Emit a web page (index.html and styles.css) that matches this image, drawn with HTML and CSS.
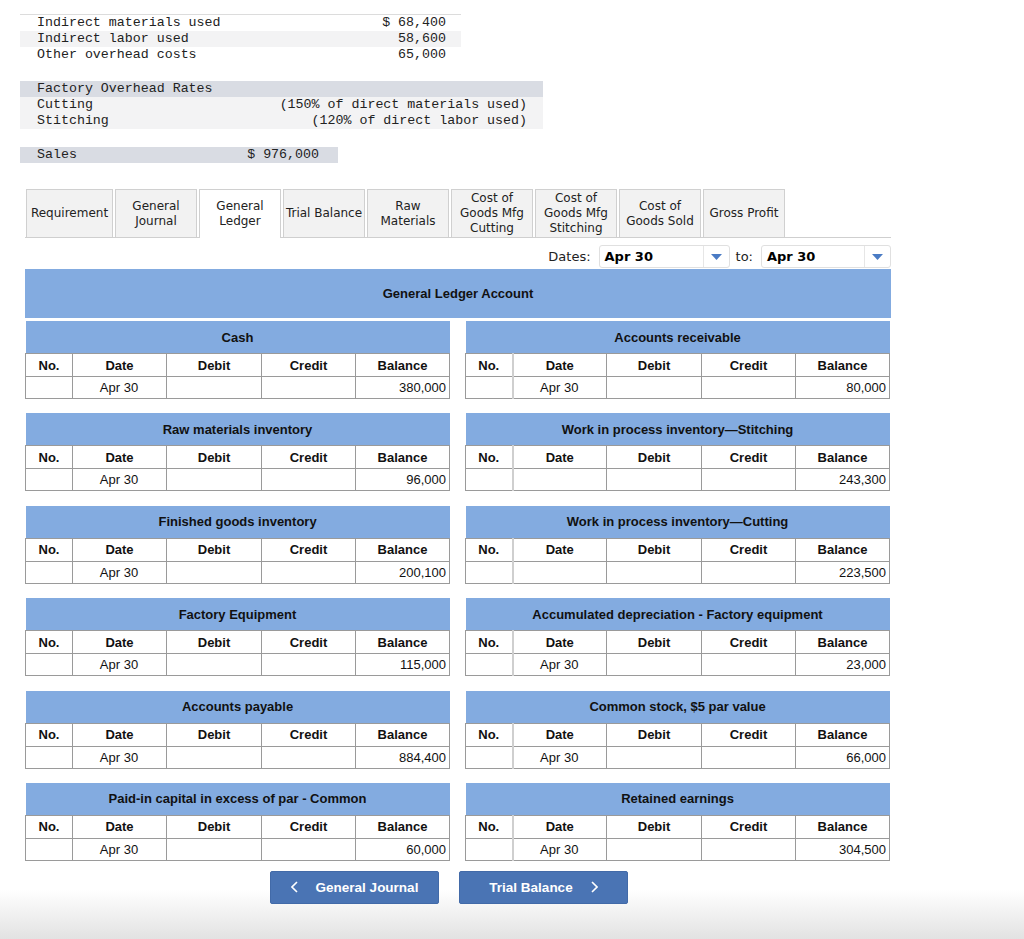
FILE: index.html
```html
<!DOCTYPE html>
<html lang="en">
<head>
<meta charset="utf-8">
<title>General Ledger</title>
<link rel="stylesheet" href="styles.css">
</head>
<body>
<div class="page">
  <table class="info info-overhead">
    <tr><td class="lbl">Indirect materials used</td><td class="amt">$ 68,400</td></tr>
    <tr class="alt"><td class="lbl">Indirect labor used</td><td class="amt">58,600</td></tr>
    <tr><td class="lbl">Other overhead costs</td><td class="amt">65,000</td></tr>
  </table>

  <table class="info info-rates">
    <tr class="head"><td class="lbl" colspan="2">Factory Overhead Rates</td></tr>
    <tr class="alt"><td class="lbl">Cutting</td><td class="amt">(150% of direct materials used)</td></tr>
    <tr class="alt"><td class="lbl">Stitching</td><td class="amt">(120% of direct labor used)</td></tr>
  </table>

  <table class="info info-sales">
    <tr class="head"><td class="lbl">Sales</td><td class="amt">$ 976,000</td></tr>
  </table>

  <div class="tabs">
    <div class="tab tab-first">Requirement</div>
    <div class="tab">General<br>Journal</div>
    <div class="tab active">General<br>Ledger</div>
    <div class="tab">Trial Balance</div>
    <div class="tab">Raw<br>Materials</div>
    <div class="tab">Cost of<br>Goods Mfg<br>Cutting</div>
    <div class="tab">Cost of<br>Goods Mfg<br>Stitching</div>
    <div class="tab">Cost of<br>Goods Sold</div>
    <div class="tab">Gross Profit</div>
  </div>

  <div class="dates">
    <span class="dates-label">Dates:</span>
    <div class="select sel-from">
      <span class="sel-value">Apr 30</span>
      <span class="sel-arrow"><svg width="11" height="6" viewBox="0 0 11 6"><path d="M0 0H11L5.5 6Z" fill="#4a7bc4"/></svg></span>
    </div>
    <span class="to-label">to:</span>
    <div class="select sel-to">
      <span class="sel-value">Apr 30</span>
      <span class="sel-arrow"><svg width="11" height="6" viewBox="0 0 11 6"><path d="M0 0H11L5.5 6Z" fill="#4a7bc4"/></svg></span>
    </div>
  </div>

  <div class="gl-head">General Ledger Account</div>

  <div class="accounts">
    <table class="acct">
      <colgroup><col class="c-no"><col class="c-date"><col class="c-deb"><col class="c-cred"><col class="c-bal"></colgroup>
      <tr><th class="title" colspan="5">Cash</th></tr>
      <tr class="hd"><th>No.</th><th>Date</th><th>Debit</th><th>Credit</th><th>Balance</th></tr>
      <tr class="row"><td></td><td class="date">Apr 30</td><td></td><td></td><td class="bal">380,000</td></tr>
    </table>
    <table class="acct right">
      <colgroup><col class="c-no"><col class="c-date"><col class="c-deb"><col class="c-cred"><col class="c-bal"></colgroup>
      <tr><th class="title" colspan="5">Accounts receivable</th></tr>
      <tr class="hd"><th class="no">No.</th><th>Date</th><th>Debit</th><th>Credit</th><th>Balance</th></tr>
      <tr class="row"><td class="no"></td><td class="date">Apr 30</td><td></td><td></td><td class="bal">80,000</td></tr>
    </table>

    <table class="acct">
      <colgroup><col class="c-no"><col class="c-date"><col class="c-deb"><col class="c-cred"><col class="c-bal"></colgroup>
      <tr><th class="title" colspan="5">Raw materials inventory</th></tr>
      <tr class="hd"><th>No.</th><th>Date</th><th>Debit</th><th>Credit</th><th>Balance</th></tr>
      <tr class="row"><td></td><td class="date">Apr 30</td><td></td><td></td><td class="bal">96,000</td></tr>
    </table>
    <table class="acct right">
      <colgroup><col class="c-no"><col class="c-date"><col class="c-deb"><col class="c-cred"><col class="c-bal"></colgroup>
      <tr><th class="title" colspan="5">Work in process inventory—Stitching</th></tr>
      <tr class="hd"><th class="no">No.</th><th>Date</th><th>Debit</th><th>Credit</th><th>Balance</th></tr>
      <tr class="row"><td class="no"></td><td class="date"></td><td></td><td></td><td class="bal">243,300</td></tr>
    </table>

    <table class="acct">
      <colgroup><col class="c-no"><col class="c-date"><col class="c-deb"><col class="c-cred"><col class="c-bal"></colgroup>
      <tr><th class="title" colspan="5">Finished goods inventory</th></tr>
      <tr class="hd"><th>No.</th><th>Date</th><th>Debit</th><th>Credit</th><th>Balance</th></tr>
      <tr class="row"><td></td><td class="date">Apr 30</td><td></td><td></td><td class="bal">200,100</td></tr>
    </table>
    <table class="acct right">
      <colgroup><col class="c-no"><col class="c-date"><col class="c-deb"><col class="c-cred"><col class="c-bal"></colgroup>
      <tr><th class="title" colspan="5">Work in process inventory—Cutting</th></tr>
      <tr class="hd"><th class="no">No.</th><th>Date</th><th>Debit</th><th>Credit</th><th>Balance</th></tr>
      <tr class="row"><td class="no"></td><td class="date"></td><td></td><td></td><td class="bal">223,500</td></tr>
    </table>

    <table class="acct">
      <colgroup><col class="c-no"><col class="c-date"><col class="c-deb"><col class="c-cred"><col class="c-bal"></colgroup>
      <tr><th class="title" colspan="5">Factory Equipment</th></tr>
      <tr class="hd"><th>No.</th><th>Date</th><th>Debit</th><th>Credit</th><th>Balance</th></tr>
      <tr class="row"><td></td><td class="date">Apr 30</td><td></td><td></td><td class="bal">115,000</td></tr>
    </table>
    <table class="acct right">
      <colgroup><col class="c-no"><col class="c-date"><col class="c-deb"><col class="c-cred"><col class="c-bal"></colgroup>
      <tr><th class="title" colspan="5">Accumulated depreciation - Factory equipment</th></tr>
      <tr class="hd"><th class="no">No.</th><th>Date</th><th>Debit</th><th>Credit</th><th>Balance</th></tr>
      <tr class="row"><td class="no"></td><td class="date">Apr 30</td><td></td><td></td><td class="bal">23,000</td></tr>
    </table>

    <table class="acct">
      <colgroup><col class="c-no"><col class="c-date"><col class="c-deb"><col class="c-cred"><col class="c-bal"></colgroup>
      <tr><th class="title" colspan="5">Accounts payable</th></tr>
      <tr class="hd"><th>No.</th><th>Date</th><th>Debit</th><th>Credit</th><th>Balance</th></tr>
      <tr class="row"><td></td><td class="date">Apr 30</td><td></td><td></td><td class="bal">884,400</td></tr>
    </table>
    <table class="acct right">
      <colgroup><col class="c-no"><col class="c-date"><col class="c-deb"><col class="c-cred"><col class="c-bal"></colgroup>
      <tr><th class="title" colspan="5">Common stock, $5 par value</th></tr>
      <tr class="hd"><th class="no">No.</th><th>Date</th><th>Debit</th><th>Credit</th><th>Balance</th></tr>
      <tr class="row"><td class="no"></td><td class="date">Apr 30</td><td></td><td></td><td class="bal">66,000</td></tr>
    </table>

    <table class="acct">
      <colgroup><col class="c-no"><col class="c-date"><col class="c-deb"><col class="c-cred"><col class="c-bal"></colgroup>
      <tr><th class="title" colspan="5">Paid-in capital in excess of par - Common</th></tr>
      <tr class="hd"><th>No.</th><th>Date</th><th>Debit</th><th>Credit</th><th>Balance</th></tr>
      <tr class="row"><td></td><td class="date">Apr 30</td><td></td><td></td><td class="bal">60,000</td></tr>
    </table>
    <table class="acct right">
      <colgroup><col class="c-no"><col class="c-date"><col class="c-deb"><col class="c-cred"><col class="c-bal"></colgroup>
      <tr><th class="title" colspan="5">Retained earnings</th></tr>
      <tr class="hd"><th class="no">No.</th><th>Date</th><th>Debit</th><th>Credit</th><th>Balance</th></tr>
      <tr class="row"><td class="no"></td><td class="date">Apr 30</td><td></td><td></td><td class="bal">304,500</td></tr>
    </table>
  </div>

  <div class="nav">
    <button class="nav-btn" type="button">
      <svg class="chev" width="7" height="12" viewBox="0 0 7 12"><path d="M6 1L1 6L6 11" fill="none" stroke="#fff" stroke-width="1.6"/></svg>
      <span>General Journal</span>
    </button>
    <button class="nav-btn" type="button">
      <span>Trial Balance</span>
      <svg class="chev" width="7" height="12" viewBox="0 0 7 12"><path d="M1 1L6 6L1 11" fill="none" stroke="#fff" stroke-width="1.6"/></svg>
    </button>
  </div>
</div>
</body>
</html>
```

FILE: styles.css
```css
html {
  background: #fff;
}

body {
  margin: 0;
  min-height: 939px;
  background: linear-gradient(to bottom, #fff 0, #fff 890px, #e2e2e2 939px);
  font-family: "Liberation Sans", Arial, sans-serif;
  color: #000;
}

.page {
  padding-top: 14px;
}

/* ---------- data tables (monospace) ---------- */
.info {
  margin-left: 20px;
  border-collapse: collapse;
  font-family: "Liberation Mono", "Courier New", monospace;
  font-size: 13.3px;
  color: #222;
}

.info td {
  height: 16px;
  line-height: 16px;
  padding: 0;
  white-space: pre;
}

.info .lbl {
  padding-left: 17px;
  text-align: left;
}

.info .amt {
  text-align: right;
}

.info .alt td {
  background: #f3f3f4;
}

.info .head td {
  background: #d9dce3;
}

.info-overhead {
  width: 441px;
  border-top: 1px solid #dcdcdc;
}

.info-overhead .amt {
  padding-right: 15px;
}

.info-rates {
  width: 523px;
  margin-top: 18px;
}

.info-rates .amt {
  padding-right: 16px;
}

.info-sales {
  width: 318px;
  margin-top: 18px;
}

.info-sales .amt {
  padding-right: 19px;
}

/* ---------- tabs ---------- */
.tabs {
  display: flex;
  gap: 2px;
  margin: 26px 0 0 25px;
  padding-left: 1px;
  width: 866px;
  box-sizing: border-box;
  border-bottom: 1px solid #cfcfcf;
  align-items: flex-end;
}

.tab {
  width: 82px;
  height: 48px;
  box-sizing: border-box;
  border: 1px solid #d0d0d0;
  border-bottom: none;
  background: #f2f2f2;
  display: flex;
  align-items: center;
  justify-content: center;
  text-align: center;
  font-family: "DejaVu Sans", Verdana, sans-serif;
  font-size: 12px;
  line-height: 15px;
  color: #222;
  white-space: nowrap;
}

.tab-first {
  width: 87px;
}

.tab.active {
  background: #fff;
  height: 49px;
  margin-bottom: -1px;
  padding-bottom: 1px;
}

/* ---------- dates ---------- */
.dates {
  display: flex;
  align-items: center;
  justify-content: flex-end;
  width: 866px;
  margin: 7px 0 0 25px;
  height: 23px;
  font-family: "DejaVu Sans", Verdana, sans-serif;
  font-size: 13px;
  color: #222;
}

.dates-label {
  margin-right: 8px;
}

.to-label {
  margin: 0 8px 0 6px;
}

.select {
  display: flex;
  height: 23px;
  box-sizing: border-box;
  border: 1px solid #e0e0e0;
  border-radius: 3px;
  background: #fff;
}

.sel-from {
  width: 131px;
}

.sel-to {
  width: 130px;
}

.sel-value {
  flex: 1;
  padding-left: 5px;
  font-weight: bold;
  line-height: 22px;
  color: #000;
}

.sel-arrow {
  width: 25px;
  border-left: 1px solid #e6e6e6;
  display: flex;
  align-items: center;
  justify-content: center;
}

/* ---------- ledger ---------- */
.gl-head {
  margin: 1px 0 0 25px;
  width: 866px;
  height: 49px;
  background: #83abe0;
  display: flex;
  align-items: center;
  justify-content: center;
  font-weight: bold;
  font-size: 13px;
  color: #111;
}

.accounts {
  display: grid;
  grid-template-columns: 424px 424px;
  column-gap: 16px;
  row-gap: 14.4px;
  margin: 3px 0 0 25px;
  width: 866px;
}

.acct {
  width: 424px;
  table-layout: fixed;
  border-collapse: collapse;
  font-size: 13px;
}

.c-no { width: 47px; }
.c-date { width: 94px; }
.c-deb { width: 95px; }
.c-cred { width: 94px; }
.c-bal { width: 94px; }

.acct .title {
  height: 32px;
  padding: 0;
  background: #83abe0;
  border: none;
  border-bottom: 1px solid #9a9a9a;
  font-weight: bold;
  text-align: center;
  color: #111;
}

.acct .hd th {
  height: 22px;
  padding: 0;
  border: 1px solid #9a9a9a;
  font-weight: bold;
  text-align: center;
  color: #111;
}

.acct .row td {
  height: 21px;
  padding: 0 3px 0 2px;
  border: 1px solid #9a9a9a;
  color: #111;
}

.acct .date {
  text-align: center;
}

.acct .bal {
  text-align: right;
}

.acct.right .no {
  border-right: 2px solid #cfcfcf;
}

/* ---------- nav buttons ---------- */
.nav {
  display: flex;
  gap: 20px;
  margin: 10px 0 0 270px;
}

.nav-btn {
  width: 169px;
  height: 33px;
  box-sizing: border-box;
  display: flex;
  align-items: center;
  justify-content: center;
  gap: 18px;
  background: #4a74b4;
  border: 1px solid #426aa8;
  border-radius: 2px;
  color: #fff;
  font-family: "Liberation Sans", Arial, sans-serif;
  font-weight: bold;
  font-size: 13.5px;
  padding: 0;
}

.chev {
  display: block;
}
```
